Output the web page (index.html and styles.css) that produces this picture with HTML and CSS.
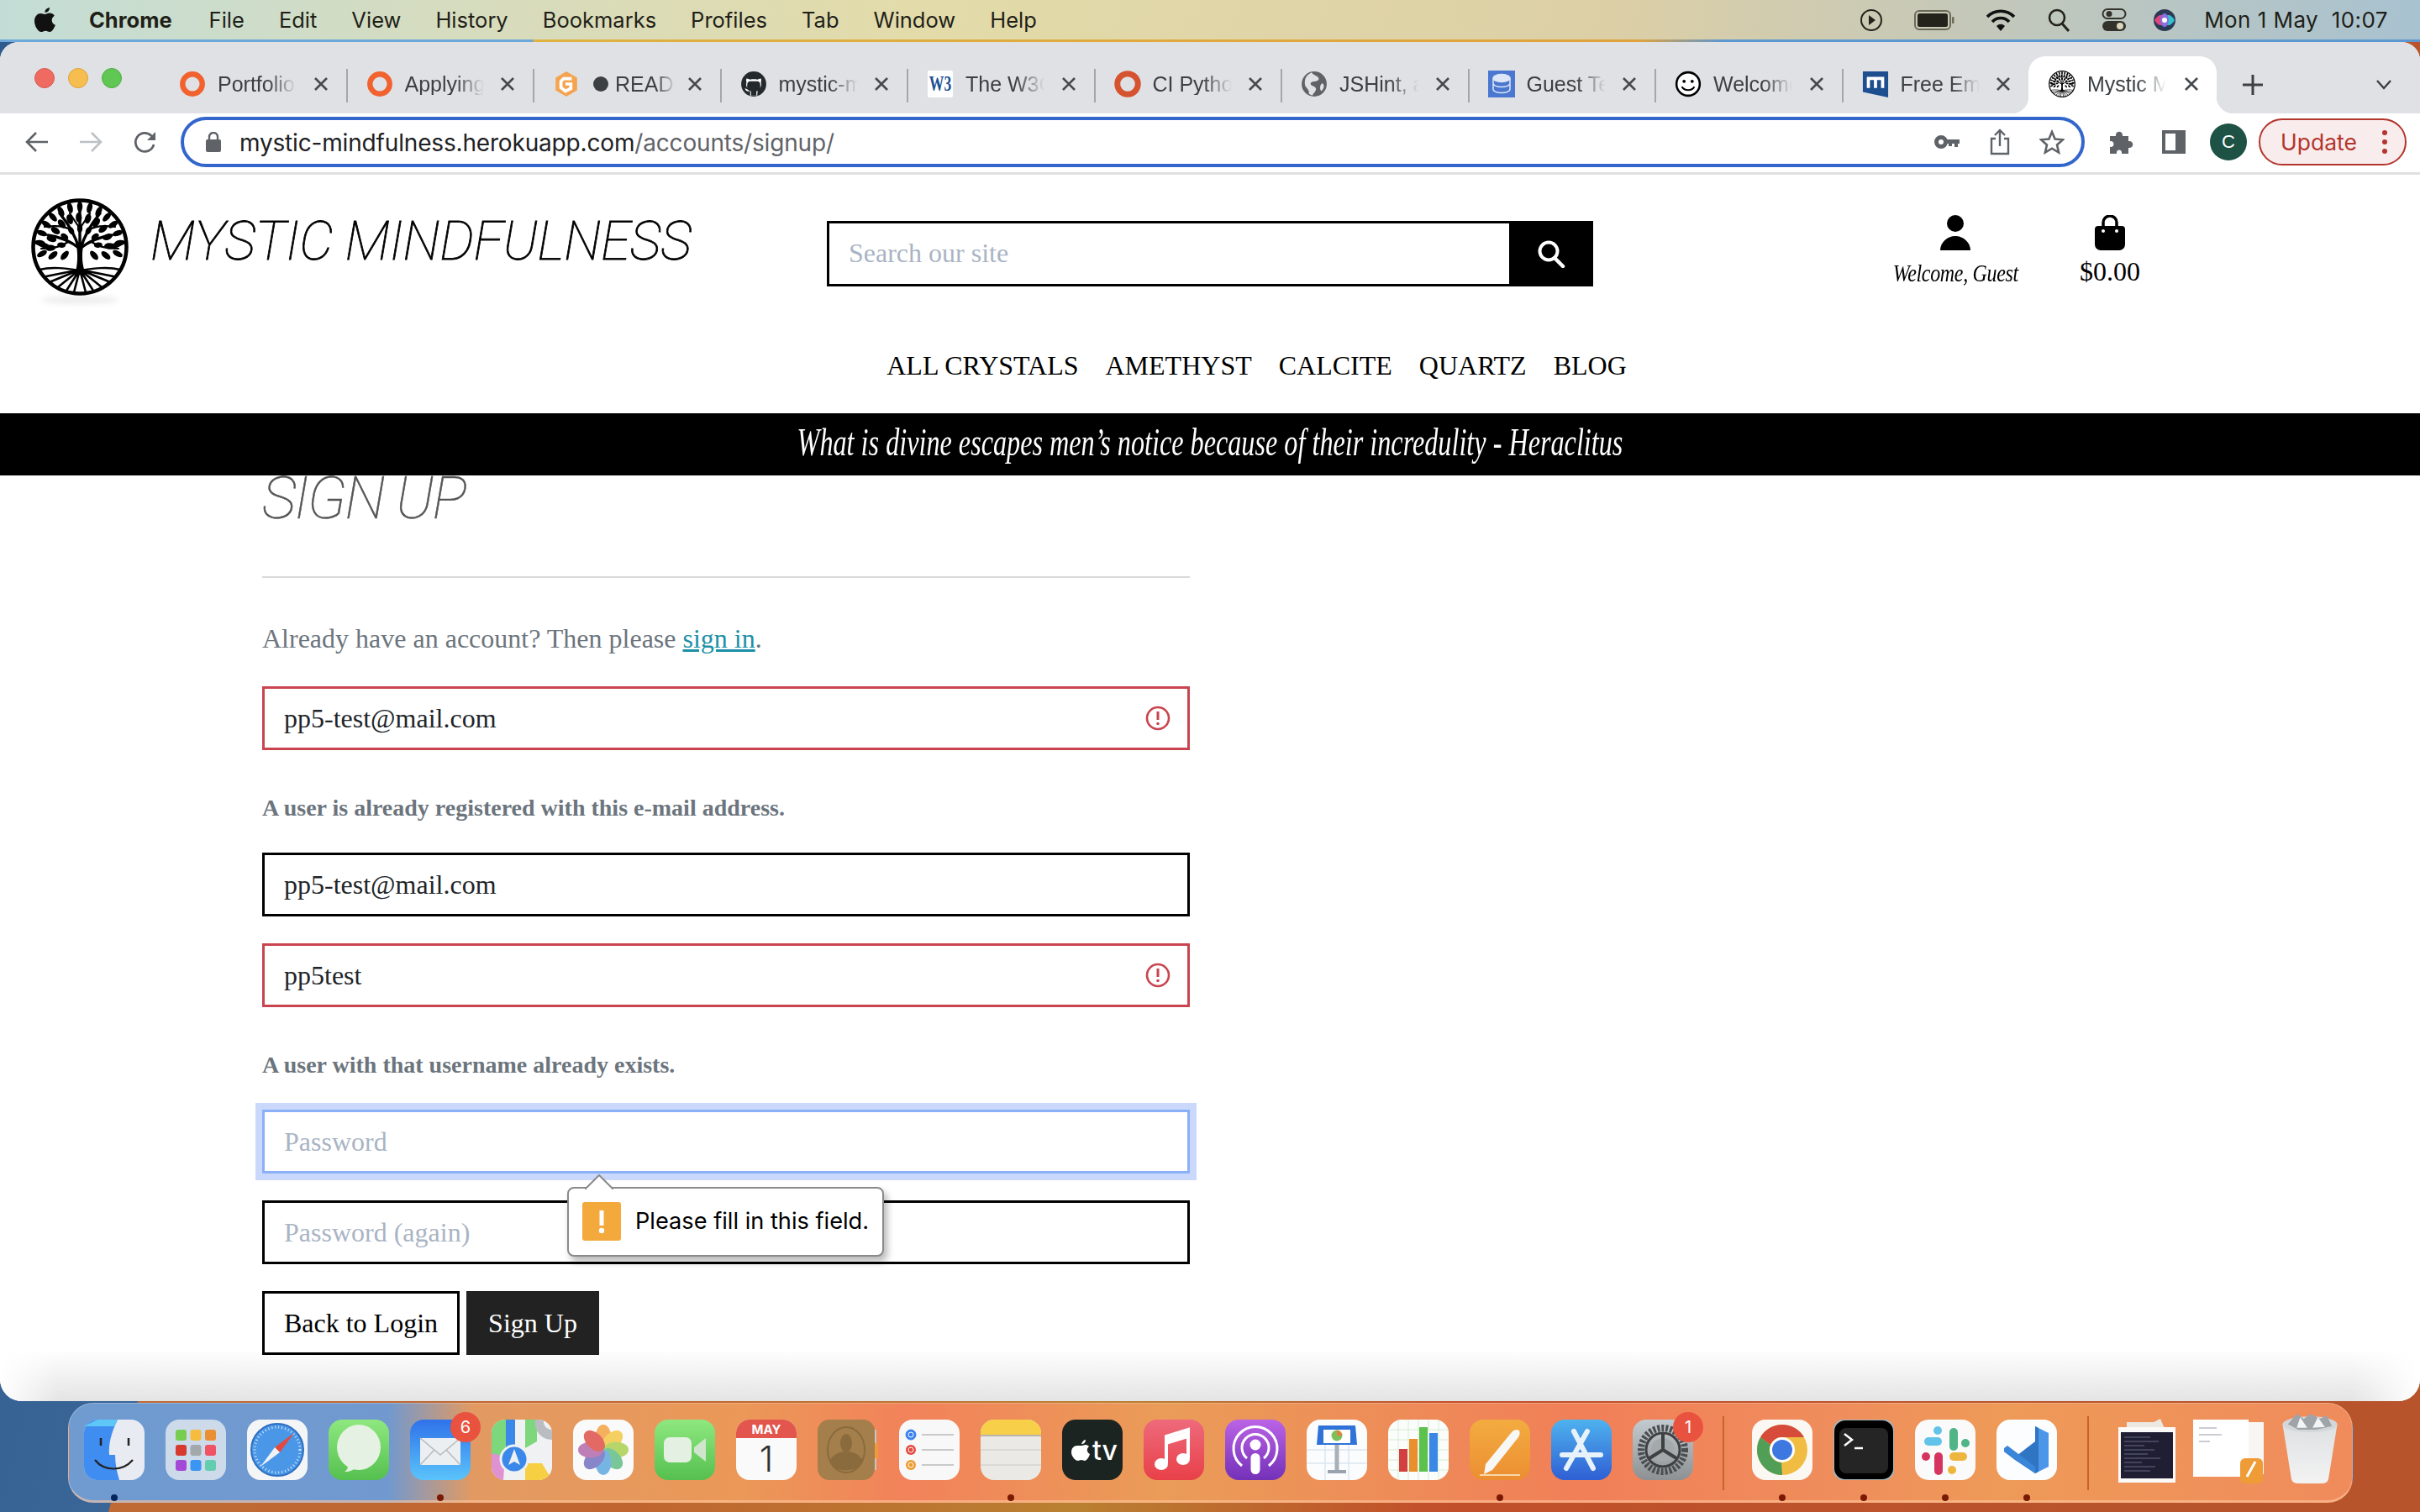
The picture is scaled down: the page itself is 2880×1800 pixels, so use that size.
FILE: index.html
```html
<!DOCTYPE html>
<html lang="en">
<head>
<meta charset="utf-8">
<title>Mystic Mindfulness</title>
<link rel="stylesheet" href="styles.css">
</head>
<body>
<svg class="defs" width="0" height="0">
  <defs>
    <symbol id="close" viewBox="0 0 20 20"><path d="M3 3L17 17M17 3L3 17" stroke="#45484d" stroke-width="2.6" fill="none"/></symbol>
    <symbol id="oring" viewBox="0 0 30 30"><circle cx="15" cy="15" r="11" fill="none" stroke="#f1622e" stroke-width="6"/></symbol>
    <symbol id="tree" viewBox="0 0 116 116">
      <circle cx="58" cy="58" r="55.5" fill="#fff" stroke="#000" stroke-width="4.5"/>
      <g fill="#000">
        <path d="M53 88C55 78 56 70 54 56L62 56C60 70 61 78 64 88Z"/>
        <ellipse cx="58" cy="10" rx="3.2" ry="6.5" transform="rotate(-84 58 58)"/><ellipse cx="58" cy="10" rx="3.2" ry="6.5" transform="rotate(-70 58 58)"/><ellipse cx="58" cy="10" rx="3.2" ry="6.5" transform="rotate(-56 58 58)"/><ellipse cx="58" cy="10" rx="3.2" ry="6.5" transform="rotate(-42 58 58)"/><ellipse cx="58" cy="10" rx="3.2" ry="6.5" transform="rotate(-28 58 58)"/><ellipse cx="58" cy="10" rx="3.2" ry="6.5" transform="rotate(-14 58 58)"/><ellipse cx="58" cy="10" rx="3.2" ry="6.5" transform="rotate(0 58 58)"/><ellipse cx="58" cy="10" rx="3.2" ry="6.5" transform="rotate(14 58 58)"/><ellipse cx="58" cy="10" rx="3.2" ry="6.5" transform="rotate(28 58 58)"/><ellipse cx="58" cy="10" rx="3.2" ry="6.5" transform="rotate(42 58 58)"/><ellipse cx="58" cy="10" rx="3.2" ry="6.5" transform="rotate(56 58 58)"/><ellipse cx="58" cy="10" rx="3.2" ry="6.5" transform="rotate(70 58 58)"/><ellipse cx="58" cy="10" rx="3.2" ry="6.5" transform="rotate(84 58 58)"/>
        <ellipse cx="58" cy="23" rx="3.6" ry="6" transform="rotate(-92 58 58)"/><ellipse cx="58" cy="23" rx="3.6" ry="6" transform="rotate(-74 58 58)"/><ellipse cx="58" cy="23" rx="3.6" ry="6" transform="rotate(-56 58 58)"/><ellipse cx="58" cy="23" rx="3.6" ry="6" transform="rotate(-38 58 58)"/><ellipse cx="58" cy="23" rx="3.6" ry="6" transform="rotate(-20 58 58)"/><ellipse cx="58" cy="23" rx="3.6" ry="6" transform="rotate(-2 58 58)"/><ellipse cx="58" cy="23" rx="3.6" ry="6" transform="rotate(16 58 58)"/><ellipse cx="58" cy="23" rx="3.6" ry="6" transform="rotate(34 58 58)"/><ellipse cx="58" cy="23" rx="3.6" ry="6" transform="rotate(52 58 58)"/><ellipse cx="58" cy="23" rx="3.6" ry="6" transform="rotate(70 58 58)"/><ellipse cx="58" cy="23" rx="3.6" ry="6" transform="rotate(88 58 58)"/>
        <ellipse cx="58" cy="36" rx="3.2" ry="5" transform="rotate(-84 58 58)"/><ellipse cx="58" cy="36" rx="3.2" ry="5" transform="rotate(-56 58 58)"/><ellipse cx="58" cy="36" rx="3.2" ry="5" transform="rotate(-28 58 58)"/><ellipse cx="58" cy="36" rx="3.2" ry="5" transform="rotate(0 58 58)"/><ellipse cx="58" cy="36" rx="3.2" ry="5" transform="rotate(28 58 58)"/><ellipse cx="58" cy="36" rx="3.2" ry="5" transform="rotate(56 58 58)"/><ellipse cx="58" cy="36" rx="3.2" ry="5" transform="rotate(84 58 58)"/>
        <ellipse cx="13" cy="66" rx="6.5" ry="3.2" transform="rotate(-30 13 66)"/><ellipse cx="26" cy="68" rx="6.5" ry="3.4" transform="rotate(-40 26 68)"/><ellipse cx="40" cy="68" rx="6.5" ry="3.4" transform="rotate(-50 40 68)"/><ellipse cx="75" cy="68" rx="6.5" ry="3.4" transform="rotate(50 75 68)"/><ellipse cx="89" cy="68" rx="6.5" ry="3.4" transform="rotate(40 89 68)"/><ellipse cx="103" cy="66" rx="6.5" ry="3.2" transform="rotate(30 103 66)"/>
        <ellipse cx="15" cy="56" rx="8" ry="3" transform="rotate(15 15 56)"/><ellipse cx="101" cy="56" rx="8" ry="3" transform="rotate(-15 101 56)"/>
      </g>
      <g fill="none" stroke="#000" stroke-linecap="round">
        <path stroke-width="3.4" d="M58 60C48 52 36 46 20 44M58 60C68 52 80 46 96 44M57 60C52 42 44 30 34 18M59 60C64 42 72 30 82 18M58 60L58 14"/>
        <path stroke-width="2.2" d="M44 52C36 58 26 60 12 60M72 52C80 58 90 60 104 60M48 38C42 34 30 32 16 34M68 38C74 34 86 32 100 34M58 36L46 18M58 36L70 18"/>
        <path stroke-width="2.4" d="M10 85C26 81 44 84 58 86C72 84 90 81 106 85"/>
        <path stroke-width="2.6" d="M58 85L18 93M58 85L24 99M58 85L33 105M58 85L42 110M58 85L51 112M58 85L65 112M58 85L74 110M58 85L83 105M58 85L92 99M58 85L98 93"/>
      </g>
    </symbol>
    <symbol id="invalid" viewBox="0 0 30 30"><circle cx="15" cy="15" r="13" fill="none" stroke="#c9444f" stroke-width="2.6"/><path d="M15 7V17" stroke="#c9444f" stroke-width="3"/><circle cx="15" cy="21.5" r="1.8" fill="#c9444f"/></symbol>
  </defs>
</svg>

<div class="desktop">
  <header class="menubar">
    <svg class="apple" viewBox="0 0 28 32"><path d="M20 1c.3 3-2.400 6-5.500 6C14 4 17 1.300 20 1zM14.500 9c1.500 0 3-1.400 5.500-1.400 2.300 0 4.500 1.200 5.800 3.100-4.700 2.800-3.800 9.200 1.100 11-1.100 3-3.800 8.300-6.700 8.300-1.900 0-2.700-1.300-5-1.300-2.400 0-3.300 1.400-5.100 1.400C6.400 30.100 2 23 2 17.200 2 11.300 5.800 8 9.300 8c2.300 0 3.800 1 5.200 1z"/></svg>
    <nav class="menus">
      <span class="menu-app">Chrome</span><span>File</span><span>Edit</span><span>View</span><span>History</span><span>Bookmarks</span><span>Profiles</span><span>Tab</span><span>Window</span><span>Help</span>
    </nav>
    <div class="status">
      <svg class="st" width="28" height="30" viewBox="0 0 28 30"><circle cx="14" cy="15" r="12" fill="none" stroke="#23231c" stroke-width="2"/><path d="M11 9L19 15L11 21Z" fill="#23231c"/></svg>
      <svg class="st" width="48" height="26" viewBox="0 0 48 26"><rect x="1" y="2" width="42" height="22" rx="5" fill="none" stroke="#6b6a58" stroke-width="2"/><rect x="4" y="5" width="36" height="16" rx="2.500" fill="#23231c"/><rect x="45" y="9" width="2.500" height="8" rx="1" fill="#6b6a58"/></svg>
      <svg class="st" width="36" height="28" viewBox="0 0 36 28"><g fill="none" stroke="#111" stroke-width="3.600"><path d="M2 10C11 1 25 1 34 10"/><path d="M8 16C13 10 23 10 28 16"/></g><path d="M13 21C16 18 20 18 23 21L18 27Z" fill="#111"/></svg>
      <svg class="st" width="28" height="30" viewBox="0 0 28 30"><circle cx="12" cy="12" r="9" fill="none" stroke="#23231c" stroke-width="2.600"/><path d="M18 19L26 28" stroke="#23231c" stroke-width="3"/></svg>
      <svg class="st st-tight" width="30" height="30" viewBox="0 0 30 30"><rect x="1.500" y="2" width="27" height="11" rx="5.500" fill="none" stroke="#33332b" stroke-width="2"/><circle cx="9" cy="7.500" r="3.500" fill="#33332b"/><rect x="1" y="16" width="28" height="12" rx="6" fill="#33332b"/><circle cx="22" cy="22" r="4" fill="#d9d6bd"/></svg>
      <svg class="st st-tight" width="28" height="28" viewBox="0 0 28 28"><circle cx="14" cy="14" r="13" fill="#2a3a55"/><path d="M2 14C8 4 14 8 14 14S8 24 2 14Z" fill="#e0457f"/><path d="M26 14C20 4 14 8 14 14S20 24 26 14Z" fill="#31c3cf"/><ellipse cx="14" cy="14" rx="5" ry="8" fill="#8a6fe0"/><circle cx="14" cy="14" r="3" fill="#fff"/></svg>
      <span class="clock">Mon 1 May&nbsp;&nbsp;10:07</span>
    </div>
  </header>

  <section class="window">
    <div class="tabstrip">
      <div class="lights"><i class="light red"></i><i class="light amber"></i><i class="light green"></i></div>
      <div class="tab"><svg class="fav"><use href="#oring"/></svg><span class="tab-title">Portfolio</span><svg class="x"><use href="#close"/></svg></div><i class="tsep"></i>
      <div class="tab"><svg class="fav"><use href="#oring"/></svg><span class="tab-title">Applying</span><svg class="x"><use href="#close"/></svg></div><i class="tsep"></i>
      <div class="tab"><svg class="fav" viewBox="0 0 30 30"><path d="M15 1L27 8V22L15 29L3 22V8Z" fill="#f4a450"/><path d="M21 9H12L9 12V19L14 23L20 20V15H14" fill="none" stroke="#fff" stroke-width="3.500"/></svg><i class="unsaved"></i><span class="tab-title tab-title-short">READI</span><svg class="x"><use href="#close"/></svg></div><i class="tsep"></i>
      <div class="tab"><svg class="fav" viewBox="0 0 30 30"><circle cx="15" cy="15" r="14" fill="#24292e"/><path d="M11 28V23C7 24 6 22 5 20C7 20 8 22 11 21C7 20 6 17 7 13C6 11 7 9 7 9C9 9 10 10 11 10C13 9.500 17 9.500 19 10C20 10 21 9 23 9C23 9 24 11 23 13C24 17 23 20 19 21C20 22 19 24 19 28Z" fill="#fff"/><path d="M12 28V23C8 23 7 19 8 14C9 11 12 12 15 12C18 12 21 11 22 14C23 19 22 23 18 23V28Z" fill="#24292e"/></svg><span class="tab-title">mystic-m</span><svg class="x"><use href="#close"/></svg></div><i class="tsep"></i>
      <div class="tab"><svg class="fav" viewBox="0 0 32 34"><rect width="32" height="34" rx="2" fill="#fff"/><text class="w3" x="2" y="26" textLength="28" lengthAdjust="spacingAndGlyphs">W3</text></svg><span class="tab-title">The W3C</span><svg class="x"><use href="#close"/></svg></div><i class="tsep"></i>
      <div class="tab"><svg class="fav" viewBox="0 0 30 30"><circle cx="15" cy="15" r="11.500" fill="none" stroke="#d6532f" stroke-width="6.500"/></svg><span class="tab-title">CI Pytho</span><svg class="x"><use href="#close"/></svg></div><i class="tsep"></i>
      <div class="tab"><svg class="fav" viewBox="0 0 30 30"><circle cx="15" cy="15" r="14" fill="#5f6368"/><path d="M12 2C15 6 21 6 20 10C18 13 13 11 11 14C10 17 16 17 17 20C17 24 14 25 13 28L9 26C10 22 7 20 5 17C4 12 4 6 12 2ZM24 14C27 16 26 20 23 23C21 21 21 16 24 14Z" fill="#dfe1e5"/></svg><span class="tab-title">JSHint, a</span><svg class="x"><use href="#close"/></svg></div><i class="tsep"></i>
      <div class="tab"><svg class="fav" viewBox="0 0 32 32"><rect width="32" height="32" fill="#4a77cf"/><g fill="#4a77cf" stroke="#dce6f7" stroke-width="1.500"><path d="M6 22C6 28 26 28 26 22V17H6Z"/><path d="M6 15C6 21 26 21 26 15V10H6Z"/><ellipse cx="16" cy="9" rx="10" ry="4.500" fill="#dce6f7"/></g></svg><span class="tab-title">Guest Te</span><svg class="x"><use href="#close"/></svg></div><i class="tsep"></i>
      <div class="tab"><svg class="fav" viewBox="0 0 30 30"><circle cx="15" cy="15" r="13" fill="#fff" stroke="#000" stroke-width="2.400"/><circle cx="10.500" cy="12" r="1.800"/><circle cx="19.500" cy="12" r="1.800"/><path d="M8 18C11 23 19 23 22 18" fill="none" stroke="#000" stroke-width="2"/></svg><span class="tab-title">Welcome</span><svg class="x"><use href="#close"/></svg></div><i class="tsep"></i>
      <div class="tab"><svg class="fav" viewBox="0 0 32 34"><path d="M0 1H32V34L0 27Z" fill="#1d4e8f"/><path d="M7 22V10H25V22M16 10V22" fill="none" stroke="#fff" stroke-width="4"/></svg><span class="tab-title">Free Em</span><svg class="x"><use href="#close"/></svg></div>
      <div class="tab tab-active"><svg class="fav"><use href="#tree"/></svg><span class="tab-title">Mystic M</span><svg class="x"><use href="#close"/></svg></div>
      <svg class="newtab" width="24" height="24" viewBox="0 0 24 24"><path d="M12 0V24M0 12H24" stroke="#3c4043" stroke-width="3"/></svg>
      <svg class="tabmenu" width="18" height="12" viewBox="0 0 18 12"><path d="M1 1L9 10L17 1" fill="none" stroke="#3c4043" stroke-width="2.400"/></svg>
    </div>

    <div class="toolbar">
      <svg class="tool-back" width="28" height="26" viewBox="0 0 28 26"><path d="M27 13H3M13 2L2 13L13 24" fill="none" stroke="#5f6368" stroke-width="2.600"/></svg>
      <svg class="tool-fwd" width="28" height="26" viewBox="0 0 28 26"><path d="M1 13H25M15 2L26 13L15 24" fill="none" stroke="#bdc1c6" stroke-width="2.600"/></svg>
      <svg class="tool-reload" width="28" height="28" viewBox="0 0 28 28"><path d="M24 17A11 11 0 1 1 21 6.500L25 10" fill="none" stroke="#5f6368" stroke-width="2.800"/><path d="M26 2V12H16Z" fill="#5f6368"/></svg>
      <div class="omnibox">
        <svg class="lock" width="18" height="24" viewBox="0 0 18 24"><rect y="9" width="18" height="15" rx="2" fill="#5f6368"/><path d="M4 10V6A5 5 0 0 1 14 6V10" fill="none" stroke="#5f6368" stroke-width="2.400"/></svg>
        <span class="url">mystic-mindfulness.herokuapp.com<span class="url-path">/accounts/signup/</span></span>
        <svg class="omni-key" width="30" height="20" viewBox="0 0 30 20"><circle cx="8" cy="10" r="5.500" fill="none" stroke="#5f6368" stroke-width="5"/><path d="M13 7H30V12H28V16H24V12H21V15H17V12H13Z" fill="#5f6368"/></svg>
        <svg class="omni-share" width="26" height="32" viewBox="0 0 26 32"><path d="M8 12H3V30H23V12H18M13 21V2M7 8L13 2L19 8" fill="none" stroke="#5f6368" stroke-width="2.400"/></svg>
        <svg class="omni-star" width="30" height="30" viewBox="0 0 30 30"><path d="M15 3L18.600 11.500L28 12.300L21 18.400L23.100 27.500L15 22.700L6.900 27.500L9 18.400L2 12.300L11.400 11.500Z" fill="none" stroke="#5f6368" stroke-width="2.600"/></svg>
      </div>
      <svg class="tool-ext" width="30" height="30" viewBox="0 0 30 30"><path d="M2 8H9C8 1 18 1 17 8H24V14C31 13 31 23 24 22V29H16C17 23 9 23 10 29H2V21C8 22 8 13 2 14Z" fill="#5f6368"/></svg>
      <svg class="tool-panel" width="28" height="28" viewBox="0 0 28 28"><path d="M0 0H28V28H0ZM4 4V24H16V4Z" fill="#5f6368" fill-rule="evenodd"/></svg>
      <div class="avatar">C</div>
      <div class="update"><span class="update-label">Update</span><svg class="update-dots" width="6" height="28" viewBox="0 0 6 28"><circle cx="3" cy="3" r="3"/><circle cx="3" cy="14" r="3"/><circle cx="3" cy="25" r="3"/></svg></div>
    </div>

    <main class="page">
      <header class="site-head">
        <div class="head-top">
          <div class="brand">
            <div class="logo"><svg class="logo-img"><use href="#tree"/></svg></div>
            <span class="brand-name">MYSTIC MINDFULNESS</span>
          </div>
          <form class="search">
            <input class="search-input" placeholder="Search our site" type="text">
            <button class="search-btn" type="button"><svg width="34" height="34" viewBox="0 0 34 34"><circle cx="14" cy="14" r="10.500" fill="none" stroke="#fff" stroke-width="4"/><path d="M21 22L31 32" stroke="#fff" stroke-width="4.500" stroke-linecap="round"/></svg></button>
          </form>
          <div class="account">
            <div class="acc-item acc-user">
              <svg width="36" height="42" viewBox="0 0 36 42"><circle cx="18" cy="10" r="10"/><path d="M0 42C0 33 8 25 18 25S36 33 36 42Z"/></svg>
              <span class="acc-welcome">Welcome, Guest</span>
            </div>
            <div class="acc-item acc-bag">
              <svg width="36" height="42" viewBox="0 0 36 42"><path d="M10 14V9A8 8 0 0 1 26 9V14" fill="none" stroke="#000" stroke-width="3.500"/><path d="M4 13H32A4 4 0 0 1 36 17V35A7 7 0 0 1 29 42H7A7 7 0 0 1 0 35V17A4 4 0 0 1 4 13Z"/><circle cx="10" cy="19" r="2" fill="#fff"/><circle cx="26" cy="19" r="2" fill="#fff"/></svg>
              <span class="acc-total">$0.00</span>
            </div>
          </div>
        </div>
        <nav class="site-nav">
          <a>ALL CRYSTALS</a><a>AMETHYST</a><a>CALCITE</a><a>QUARTZ</a><a>BLOG</a>
        </nav>
      </header>
      <div class="quote"><span class="quote-text">What is divine escapes men’s notice because of their incredulity - Heraclitus</span></div>

      <section class="signup">
        <h2 class="signup-title">SIGN UP</h2>
        <hr class="rule">
        <p class="lead">Already have an account? Then please <a class="link">sign in</a>.</p>
        <div class="field"><input class="control invalid" value="pp5-test@mail.com" type="text"><svg class="invalid-icon"><use href="#invalid"/></svg></div>
        <p class="err">A user is already registered with this e-mail address.</p>
        <div class="field"><input class="control" value="pp5-test@mail.com" type="text"></div>
        <div class="field"><input class="control invalid" value="pp5test" type="text"><svg class="invalid-icon"><use href="#invalid"/></svg></div>
        <p class="err">A user with that username already exists.</p>
        <div class="field"><input class="control focus" placeholder="Password" type="text"></div>
        <div class="field field-tip">
          <input class="control" placeholder="Password (again)" type="text">
          <div class="bubble">
            <svg class="bubble-arrow" width="34" height="18" viewBox="0 0 34 18"><path d="M0 18L17 1L34 18" fill="#fff" stroke="#8a8a8a" stroke-width="2"/></svg>
            <svg class="bubble-icon" width="46" height="46" viewBox="0 0 46 46"><rect width="46" height="46" rx="3" fill="#f3a93c"/><path d="M20.500 10H25.500V28H20.500Z" fill="#fff"/><circle cx="23" cy="34" r="3.200" fill="#fff"/></svg>
            <span>Please fill in this field.</span>
          </div>
        </div>
        <div class="actions"><button class="btn btn-back" type="button">Back to Login</button><button class="btn btn-go" type="button">Sign Up</button></div>
      </section>
    </main>
  </section>

  <footer class="dock">
    <div class="di"><svg viewBox="0 0 72 72"><rect width="72" height="72" rx="16" fill="#e8ebf2"/><path d="M16 0H40C32 16 29 30 30 42H37C37 52 39 62 42 72H16A16 16 0 0 1 0 56V16A16 16 0 0 1 16 0Z" fill="#3f8df0"/><path d="M16 0H40L36 8H0Z" fill="#5fc6f8"/><path d="M20 22V31M53 22V31" stroke="#222" stroke-width="2.500"/><path d="M13 48C24 62 46 62 58 48" fill="none" stroke="#222" stroke-width="2.200"/></svg><i class="dot dot-blue"></i></div>
    <div class="di"><svg viewBox="0 0 72 72"><rect width="72" height="72" rx="16" fill="#ccdaea"/><rect x="12" y="12" width="13" height="13" rx="3" fill="#76cd4f"/><rect x="29.500" y="12" width="13" height="13" rx="3" fill="#f5bc3d"/><rect x="47" y="12" width="13" height="13" rx="3" fill="#ea8f33"/><rect x="12" y="30" width="13" height="13" rx="3" fill="#d8392f"/><rect x="29.500" y="30" width="13" height="13" rx="3" fill="#a3a9ab"/><rect x="47" y="30" width="13" height="13" rx="3" fill="#ef5364"/><rect x="12" y="48" width="13" height="13" rx="3" fill="#a449d6"/><rect x="29.500" y="48" width="13" height="13" rx="3" fill="#3b95f2"/><rect x="47" y="48" width="13" height="13" rx="3" fill="#64cdb0"/></svg><i class="dot dot-none"></i></div>
    <div class="di"><svg viewBox="0 0 72 72"><rect width="72" height="72" rx="16" fill="#f4f5f7"/><circle cx="36" cy="36" r="31" fill="#4a97e8" stroke="#2f6fc0" stroke-width="2"/><circle cx="36" cy="36" r="27" fill="none" stroke="#d5e8fa" stroke-width="3" stroke-dasharray="1 3"/><path d="M56 16L33 33L39 39Z" fill="#e5483c"/><path d="M16 56L33 33L39 39Z" fill="#f1f2f4"/></svg><i class="dot dot-none"></i></div>
    <div class="di"><svg viewBox="0 0 72 72"><defs><linearGradient id="gg" x1="0" y1="0" x2="0" y2="1"><stop offset="0" stop-color="#8ee87f"/><stop offset="1" stop-color="#55c04f"/></linearGradient></defs><rect width="72" height="72" rx="16" fill="url(#gg)"/><ellipse cx="36" cy="33" rx="26" ry="27" fill="#e5f1e2"/><path d="M22 52C24 58 22 60 19 62C26 62 30 60 33 56Z" fill="#e5f1e2"/></svg><i class="dot dot-none"></i></div>
    <div class="di"><svg viewBox="0 0 72 72"><defs><linearGradient id="gm" x1="0" y1="0" x2="0" y2="1"><stop offset="0" stop-color="#2f72ea"/><stop offset="1" stop-color="#5bc4fb"/></linearGradient></defs><rect width="72" height="72" rx="16" fill="url(#gm)"/><rect x="12" y="22" width="48" height="32" rx="2" fill="#eceff1"/><path d="M12 22L36 42L60 22M12 54L29 36M60 54L43 36" fill="none" stroke="#b6babe" stroke-width="1.500"/></svg><b class="badge">6</b><i class="dot"></i></div>
    <div class="di"><svg viewBox="0 0 72 72"><clipPath id="cm"><rect width="72" height="72" rx="16"/></clipPath><g clip-path="url(#cm)"><rect width="72" height="72" fill="#f0f1f3"/><path d="M0 0H20V34L0 50Z" fill="#7cd77d"/><path d="M40 0H54V26L40 34Z" fill="#7cd77d"/><path d="M0 40V72H14L16 44Z" fill="#df92d2"/><path d="M40 72V52H60L72 72Z" fill="#f6cf42"/><path d="M17 0H28V40H17Z" fill="#3a88ea"/><path d="M52 0A20 20 0 0 0 72 24V12A10 10 0 0 1 62 0Z" fill="#b9bcc0"/><circle cx="27" cy="47" r="16" fill="#3a88ea" stroke="#eef0f2" stroke-width="3"/><path d="M27 35L34 54L27 50L20 54Z" fill="#eef0f2"/></g></svg><i class="dot dot-none"></i></div>
    <div class="di"><svg viewBox="0 0 72 72"><rect width="72" height="72" rx="16" fill="#fafafa"/><g opacity=".82"><ellipse cx="36" cy="21" rx="9.500" ry="15" fill="#f5a03c"/><ellipse cx="36" cy="21" rx="9.500" ry="15" fill="#f3c842" transform="rotate(45 36 36)"/><ellipse cx="36" cy="21" rx="9.500" ry="15" fill="#a9cf4b" transform="rotate(90 36 36)"/><ellipse cx="36" cy="21" rx="9.500" ry="15" fill="#5dbb84" transform="rotate(135 36 36)"/><ellipse cx="36" cy="21" rx="9.500" ry="15" fill="#5aa6df" transform="rotate(180 36 36)"/><ellipse cx="36" cy="21" rx="9.500" ry="15" fill="#6e6dc0" transform="rotate(225 36 36)"/><ellipse cx="36" cy="21" rx="9.500" ry="15" fill="#b165a9" transform="rotate(270 36 36)"/><ellipse cx="36" cy="21" rx="9.500" ry="15" fill="#df4a44" transform="rotate(315 36 36)"/></g></svg><i class="dot dot-none"></i></div>
    <div class="di"><svg viewBox="0 0 72 72"><rect width="72" height="72" rx="16" fill="url(#gg)"/><rect x="11" y="21" width="33" height="30" rx="7" fill="#e4f0e2"/><path d="M47 33L61 22V50L47 39Z" fill="#cfe6cc"/></svg><i class="dot dot-none"></i></div>
    <div class="di"><svg viewBox="0 0 72 72"><clipPath id="cc"><rect width="72" height="72" rx="16"/></clipPath><g clip-path="url(#cc)"><rect width="72" height="72" fill="#fafafa"/><rect width="72" height="22" fill="#e2564e"/></g><text class="cal-mon" x="36" y="17" text-anchor="middle">MAY</text><text class="cal-day" x="36" y="62" text-anchor="middle">1</text></svg><i class="dot dot-none"></i></div>
    <div class="di"><svg viewBox="0 0 72 72"><path d="M60 12H70V60H60Z" fill="#c9c6c0"/><path d="M60 28H72V46H60Z" fill="#f09a3c"/><rect width="68" height="72" rx="14" fill="#a47f4b"/><ellipse cx="34" cy="36" rx="22" ry="27" fill="none" stroke="#8a6b3d" stroke-width="2"/><ellipse cx="34" cy="28" rx="7" ry="11" fill="#8a6b3d"/><path d="M14 50C20 34 48 34 54 50C48 64 20 64 14 50Z" fill="#8a6b3d"/></svg><i class="dot dot-none"></i></div>
    <div class="di"><svg viewBox="0 0 72 72"><rect width="72" height="72" rx="16" fill="#f8f8f8"/><circle cx="14" cy="18" r="6" fill="#3a82ef" stroke="#3a82ef"/><circle cx="14" cy="36" r="6" fill="#e5493f"/><circle cx="14" cy="54" r="6" fill="#ed9a2f"/><circle cx="14" cy="18" r="3" fill="none" stroke="#fff"/><circle cx="14" cy="36" r="3" fill="none" stroke="#fff"/><circle cx="14" cy="54" r="3" fill="none" stroke="#fff"/><path d="M27 18H65M27 36H65M27 54H65" stroke="#c9c9c9" stroke-width="2"/></svg><i class="dot dot-none"></i></div>
    <div class="di"><svg viewBox="0 0 72 72"><clipPath id="cn"><rect width="72" height="72" rx="16"/></clipPath><g clip-path="url(#cn)"><rect width="72" height="72" fill="#ebe9e5"/><rect width="72" height="18" fill="#f7cf49"/><path d="M0 19H72" stroke="#b8b5ac" stroke-width="2"/><path d="M0 36H72M0 54H72" stroke="#d5d3ce" stroke-width="1.500"/></g></svg><i class="dot"></i></div>
    <div class="di"><svg viewBox="0 0 72 72"><rect width="72" height="72" rx="16" fill="#1c2422"/><path d="M23 17C24 14 26 12 28 12C28 15 26 17 23 17ZM23 19C25 19 26 18 28 18C30 18 31 19 32 20C29 22 29 27 33 29C32 33 29 37 27 37C25 37 25 36 23 36C21 36 20 37 19 37C16 37 11 32 11 27C11 22 14 19 18 19C20 19 21 19 23 19Z" fill="#fff" transform="translate(0 12)"/><text class="tv" x="36" y="48">tv</text></svg><i class="dot dot-none"></i></div>
    <div class="di"><svg viewBox="0 0 72 72"><defs><linearGradient id="gr" x1="0" y1="0" x2="0" y2="1"><stop offset="0" stop-color="#ee6a7c"/><stop offset="1" stop-color="#e84048"/></linearGradient></defs><rect width="72" height="72" rx="16" fill="url(#gr)"/><path d="M27 52V20L53 12V46" fill="none" stroke="#fff" stroke-width="4"/><path d="M27 22L53 14V22L27 30Z" fill="#fff"/><ellipse cx="21" cy="53" rx="8" ry="7" fill="#fff"/><ellipse cx="47" cy="47" rx="8" ry="7" fill="#fff"/></svg><i class="dot dot-none"></i></div>
    <div class="di"><svg viewBox="0 0 72 72"><defs><linearGradient id="gp" x1="0" y1="0" x2="0" y2="1"><stop offset="0" stop-color="#bb63e6"/><stop offset="1" stop-color="#7331b8"/></linearGradient></defs><rect width="72" height="72" rx="16" fill="url(#gp)"/><g fill="none" stroke="#fff" stroke-width="3"><path d="M20 55A26 26 0 1 1 52 55"/><path d="M26 46A16 16 0 1 1 46 46"/></g><circle cx="36" cy="30" r="6.500" fill="#fff"/><rect x="30.500" y="40" width="11" height="25" rx="5.500" fill="#fff"/></svg><i class="dot dot-none"></i></div>
    <div class="di"><svg viewBox="0 0 72 72"><rect width="72" height="72" rx="16" fill="#fbfcfe"/><path d="M0 36H72M0 52H72M22 30V72M50 30V72" stroke="#dce5f0" stroke-width="1.500"/><path d="M14 7H58L60 30H12Z" fill="#2f73d9"/><rect x="20" y="12" width="32" height="16" fill="#fff"/><circle cx="36" cy="19" r="6.500" fill="#7cc05b"/><path d="M36 12.500A6.500 6.500 0 0 1 42 19H36Z" fill="#e6803b"/><rect x="33.500" y="30" width="5" height="30" fill="#a8b0ba"/><rect x="25" y="60" width="22" height="4" fill="#9aa2ac"/></svg><i class="dot dot-none"></i></div>
    <div class="di"><svg viewBox="0 0 72 72"><rect width="72" height="72" rx="16" fill="#fbfdfb"/><path d="M0 12H72M0 24H72M0 36H72M0 48H72M0 60H72M12 0V72M24 0V72M36 0V72M48 0V72M60 0V72" stroke="#d4ecd3" stroke-width="1"/><rect x="13" y="35" width="10" height="27" fill="#d2403f"/><rect x="25" y="23" width="10" height="39" fill="#ea8f2d"/><rect x="37" y="9" width="10" height="53" fill="#5dc24d"/><rect x="49" y="16" width="10" height="46" fill="#3a87e5"/></svg><i class="dot dot-none"></i></div>
    <div class="di"><svg viewBox="0 0 72 72"><defs><linearGradient id="gpg" x1="0" y1="0" x2="0" y2="1"><stop offset="0" stop-color="#f3ac40"/><stop offset="1" stop-color="#ec8e32"/></linearGradient></defs><rect width="72" height="72" rx="16" fill="url(#gpg)"/><path d="M56 12C61 12 60 18 58 21L27 60L17 65L19 53L50 15C52 13 54 12 56 12Z" fill="#f7f7f5"/><path d="M12 66H60" stroke="#f9d7a8" stroke-width="2"/></svg><i class="dot"></i></div>
    <div class="di"><svg viewBox="0 0 72 72"><defs><linearGradient id="ga" x1="0" y1="0" x2="0" y2="1"><stop offset="0" stop-color="#4eb2ee"/><stop offset="1" stop-color="#2f5fd4"/></linearGradient></defs><rect width="72" height="72" rx="16" fill="url(#ga)"/><g stroke="#e8f2fb" stroke-width="6" stroke-linecap="round" fill="none"><path d="M27 14L50 58"/><path d="M43 14L18 58"/><path d="M13 42H59"/></g></svg><i class="dot dot-none"></i></div>
    <div class="di"><svg viewBox="0 0 72 72"><defs><linearGradient id="gs" x1="0" y1="0" x2="0" y2="1"><stop offset="0" stop-color="#c3cbd0"/><stop offset="1" stop-color="#8d9193"/></linearGradient></defs><rect width="72" height="72" rx="16" fill="url(#gs)"/><circle cx="36" cy="36" r="26" fill="none" stroke="#4b4e50" stroke-width="8" stroke-dasharray="3 2"/><circle cx="36" cy="36" r="20" fill="none" stroke="#3e4042" stroke-width="3"/><circle cx="36" cy="36" r="14" fill="#a4a9ac"/><path d="M36 36V17M36 36L20 46M36 36L52 46" stroke="#3e4042" stroke-width="4"/></svg><b class="badge badge-settings">1</b><i class="dot dot-none"></i></div>
    <i class="dock-sep dock-sep-a"></i>
    <div class="di"><svg viewBox="0 0 72 72"><rect width="72" height="72" rx="16" fill="#fbf8f4"/><circle cx="36" cy="36" r="30" fill="#f0bd42"/><path d="M10 21A30 30 0 0 1 62 21H36A15 15 0 0 0 22 30Z" fill="#d64b39"/><path d="M10 21L22 30A15 15 0 0 0 35 51L36 66A30 30 0 0 1 10 21Z" fill="#519e57"/><circle cx="36" cy="36" r="15" fill="#fff"/><circle cx="36" cy="36" r="12" fill="#3d78e0"/></svg><i class="dot"></i></div>
    <div class="di"><svg viewBox="0 0 72 72"><rect width="72" height="72" rx="14" fill="#000" stroke="#a5b5b8" stroke-width="2"/><rect x="7" y="10" width="58" height="54" rx="8" fill="#252525"/><path d="M13 17L22 24L13 31" fill="none" stroke="#fff" stroke-width="2.500"/><path d="M25 34H35" stroke="#fff" stroke-width="2.500"/></svg><i class="dot"></i></div>
    <div class="di"><svg viewBox="0 0 72 72"><rect width="72" height="72" rx="16" fill="#fafafa"/><g stroke-linecap="round" stroke-width="10" fill="none"><path d="M27 26H16" stroke="#62c3ea"/><path d="M46 15V32" stroke="#4fb486"/><path d="M27 13H27" stroke="#62c3ea"/><path d="M60 28H60" stroke="#4fb486"/><path d="M28 44V61" stroke="#d6345f"/><path d="M13 44H13" stroke="#d6345f"/><path d="M46 44H57" stroke="#edb63f"/><path d="M44 60H44" stroke="#edb63f"/></g></svg><i class="dot"></i></div>
    <div class="di"><svg viewBox="0 0 72 72"><rect width="72" height="72" rx="16" fill="#fbfdff"/><path d="M46 8L62 16V56L46 64Z" fill="#4b96e8"/><path d="M46 8V26L24 43L13 35L9 38L22 48L46 64L50 62V10Z" fill="#2f75c4"/><path d="M9 34L13 31L46 56V64L9 38Z" fill="#3a86d8"/></svg><i class="dot"></i></div>
    <i class="dock-sep dock-sep-b"></i>
    <div class="di di-file"><svg viewBox="0 0 72 80"><path d="M12 8H44L52 4L58 18H12Z" fill="#ece8e2"/><rect x="2" y="14" width="68" height="66" fill="#fbfaf8"/><rect x="5" y="20" width="62" height="55" fill="#201e33"/><path d="M9 26H40M9 31H50M9 36H33M9 41H45M9 46H37M9 51H52M9 56H30M9 61H46M9 66H40" stroke="#646a86" stroke-width="1"/></svg></div>
    <div class="di di-wide"><svg viewBox="0 0 84 80"><rect y="5" width="84" height="62" fill="#f8f6f2"/><rect width="66" height="68" y="2" fill="#fff"/><path d="M7 12H28M7 20H34M7 28H20" stroke="#99a" stroke-width="1"/><rect x="56" y="48" width="27" height="30" rx="6" fill="#ef9b36"/><path d="M74 52L64 70" stroke="#fff" stroke-width="3"/></svg></div>
    <div class="di di-file"><svg viewBox="0 0 66 80"><defs><linearGradient id="gt" x1="0" y1="0" x2="0" y2="1"><stop offset="0" stop-color="#dde0e2"/><stop offset="1" stop-color="#f3f3f3"/></linearGradient></defs><path d="M2 12L12 74Q13 79 20 79H46Q53 79 54 74L64 12Z" fill="url(#gt)"/><ellipse cx="33" cy="12" rx="31" ry="9" fill="#d4d7d9"/><path d="M8 12L18 0L26 6L34 0L44 6L52 2L58 14L40 18L20 18Z" fill="#9ea4a8"/><path d="M22 4L30 16L18 16ZM42 4L50 15L36 16Z" fill="#f3f4f5"/></svg></div>
  </footer>
</div>
</body>
</html>
```
FILE: styles.css
```css
* { box-sizing: border-box; }
html, body { margin: 0; padding: 0; background: #fff; }
.defs { position: absolute; }
i, b { display: block; }

.desktop {
  width: 2880px; height: 1800px; overflow: hidden;
  display: flex; flex-direction: column;
  background:
    linear-gradient(105deg, #2f5a8d 0, #3a6597 590px, #bf6a35 591px, #c0652f 1200px, #b98031 1700px, #c2502a 2100px, #b8542c 2880px);
}

/* menu bar */
.menubar {
  height: 50px; flex: none; display: flex; align-items: center; position: relative;
  color: #1f1f18; font: 25.5px/1 Inter, sans-serif;
  background: linear-gradient(90deg, #c3ddd6 0, #d6dcbf 540px, #e3dba9 1100px, #dccfa6 1920px, #c4c8b9 2350px, #a8c2d0 2880px);
  border-bottom: 3px solid;
  border-image: linear-gradient(90deg, #6da8d8 0, #6da8d8 634px, #dfb242 636px, #e0a23c 1950px, #5c97d0 2050px, #5c97d0 100%) 1;
}
.apple { width: 28px; height: 32px; margin: 0 0 0 39px; fill: #111; flex: none; }
.menus { display: flex; gap: 41px; margin-left: 39px; }
.menu-app { font-weight: 700; margin-right: 3px; }
.status { margin-left: auto; display: flex; align-items: center; padding-right: 38px; font-size: 26px; }
.st { flex: none; margin-right: 37px; }
.st-tight { margin-right: 31px; }
.clock { white-space: nowrap; letter-spacing: .45px; margin-left: 2px; }

/* browser window */
.window {
  height: 1618px; flex: none; display: flex; flex-direction: column;
  background: #fff; border-radius: 22px 22px 26px 26px; overflow: hidden; position: relative;
}
.tabstrip {
  height: 85px; flex: none; background: #dfe1e5; display: flex; align-items: flex-end; padding-left: 41px; position: relative;
}
.lights { display: flex; gap: 16px; width: 150px; height: 68px; padding-top: 14px; flex: none; }
.light { width: 24px; height: 24px; border-radius: 50%; }
.red { background: #ef6a60; border: 1px solid #d9584f; }
.amber { background: #f6bd4f; border: 1px solid #dea13a; }
.green { background: #60c654; border: 1px solid #4dae42; }
.tab {
  width: 220.5px; height: 68px; flex: none; display: flex; align-items: center; position: relative;
  padding: 0 20px 2px 22px; color: #3c4043; font: 25px/1 "Liberation Sans", sans-serif;
}
.tsep { width: 2px; height: 40px; background: #a4a6aa; flex: none; margin-bottom: 13px; }
.fav { width: 32px; height: 32px; flex: none; margin-right: 14px; }
.tab-title { white-space: nowrap; width: 106px; -webkit-mask-image: linear-gradient(90deg, #000 60px, transparent 94px); mask-image: linear-gradient(90deg, #000 60px, transparent 94px); }
.tab-title-short { width: 78px; -webkit-mask-image: linear-gradient(90deg, #000 48px, transparent 72px); mask-image: linear-gradient(90deg, #000 48px, transparent 72px); }
.unsaved { width: 18px; height: 18px; border-radius: 50%; background: #3c4043; margin: 0 8px 0 2px; flex: none; }
.x { width: 20px; height: 20px; margin-left: auto; flex: none; }
.w3 { font: 700 26px "Liberation Serif", serif; fill: #1a4f93; }
.tab-active { background: #fff; border-radius: 20px 20px 0 0; width: 224px; padding-left: 24px; }
.tab-active::before, .tab-active::after { content: ""; position: absolute; bottom: 0; width: 20px; height: 20px; }
.tab-active::before { left: -20px; background: radial-gradient(circle at 0 0, #dfe1e5 20px, #fff 20.5px); }
.tab-active::after { right: -20px; background: radial-gradient(circle at 100% 0, #dfe1e5 20px, #fff 20.5px); }
.newtab { margin: 0 0 22px 31px; flex: none; }
.tabmenu { margin: 0 0 28px 135px; flex: none; }

.toolbar {
  height: 73px; flex: none; display: flex; align-items: center; background: #fff; border-bottom: 3px solid #e0e0e0; padding: 0 17px 3px 30px;
}
.tool-back { margin-right: 36px; flex: none; }
.tool-fwd { margin-right: 37px; flex: none; }
.tool-reload { margin-right: 28px; flex: none; }
.omnibox {
  width: 2266px; height: 60px; flex: none; border: 4px solid #3366cc; border-radius: 30px; display: flex; align-items: center; padding-left: 26px; background: #fff;
}
.lock { flex: none; margin-right: 22px; }
.url { font: 28px/1 Inter, sans-serif; letter-spacing: -.17px; color: #202124; white-space: nowrap; padding-top: 2px; }
.url-path { color: #5f6368; }
.omni-key { margin-left: auto; flex: none; }
.omni-share { margin-left: 35px; flex: none; }
.omni-star { margin: 0 20px 0 34px; flex: none; }
.tool-ext { margin-left: 28px; flex: none; }
.tool-panel { margin-left: 34px; flex: none; }
.avatar { width: 44px; height: 44px; border-radius: 50%; background: #1d5244; color: #fff; font: 22px/44px "Liberation Sans", sans-serif; text-align: center; margin-left: 29px; flex: none; }
.update {
  width: 176px; height: 56px; flex: none; margin-left: 14px; border: 2px solid #b3352c; border-radius: 28px; background: #f8ecec;
  color: #b3352c; font: 26.5px/1 Inter, sans-serif; display: flex; align-items: center; padding-left: 24px;
}
.update-label { padding-top: 2px; }
.update-dots { margin-left: auto; margin-right: 21px; fill: #b3352c; flex: none; }

/* site */
.page { flex: 1; position: relative; background: #fff; font: 32px/1.5 "Liberation Serif", serif; color: #212529; }
.page::after {
  content: ""; position: absolute; left: 0; right: 0; bottom: 0; height: 62px; pointer-events: none;
  background: linear-gradient(180deg, rgba(228,228,228,0) 0, #e4e4e4 100%);
  -webkit-mask-image: linear-gradient(90deg, transparent 0, #000 70px, #000 2800px, transparent 100%);
  mask-image: linear-gradient(90deg, transparent 0, #000 70px, #000 2800px, transparent 100%);
}
.site-head { height: 284px; display: flex; flex-direction: column; }
.head-top { display: flex; height: 200px; flex: none; }
.brand { width: 984px; flex: none; display: flex; padding: 28px 0 0 37px; }
.logo { width: 116px; height: 116px; flex: none; position: relative; }
.logo::after { content: ""; position: absolute; left: 12px; right: 12px; top: 116px; height: 10px; border-radius: 50%; background: rgba(0,0,0,.07); filter: blur(3px); }
.logo-img { width: 116px; height: 116px; display: block; position: relative; z-index: 1; }
.brand-name {
  font: italic 100 64px/1 Roboto, sans-serif; color: #000; white-space: nowrap; margin: 20px 0 0 26px; height: 64px;
  letter-spacing: -.35px; -webkit-text-stroke: .8px #000;
}
.search { width: 912px; height: 78px; flex: none; margin-top: 55px; display: flex; }
.search-input {
  flex: 1; min-width: 0; border: 3px solid #000; border-right: 0; height: 78px; padding: 0 23px 2px; font: 32px "Liberation Serif", serif; outline: 0; background: #fff; border-radius: 0;
}
.search-input::placeholder { color: #a9b4c4; opacity: 1; }
.search-btn { width: 100px; height: 78px; background: #000; border: 0; padding: 0; display: flex; align-items: center; justify-content: center; }
.account { display: flex; padding: 48px 0 0 0; flex: 1; }
.acc-item { display: flex; flex-direction: column; align-items: center; flex: none; }
.acc-user { width: 200px; margin-left: 331px; }
.acc-bag { width: 120px; margin-left: 24px; }
.acc-welcome { font: italic 30px/1 "Liberation Serif", serif; margin-top: 12px; color: #000; white-space: nowrap; transform: scaleX(.8); letter-spacing: -.4px; }
.acc-total { font: 32px/1 "Liberation Serif", serif; margin-top: 9px; color: #000; }
.site-nav { display: flex; justify-content: center; gap: 32px; padding: 0 0 0 111px; margin-top: 3px; font-size: 32px; line-height: 48px; color: #000; }

.quote { height: 74px; background: #000; color: #fff; display: flex; justify-content: center; align-items: center; overflow: hidden; padding-bottom: 5px; }
.quote-text { font: italic 46px/1 "Liberation Serif", serif; white-space: nowrap; display: block; transform: scaleX(.7); flex: none; }

.signup { width: 1104px; margin-left: 312px; }
.signup-title { font: italic 100 70px/1 Roboto, sans-serif; color: #555; margin: -8px 0 0; height: 128px; -webkit-text-stroke: .5px #555; letter-spacing: -2px; }
.rule { margin: 0; border: 0; border-top: 2px solid #d9d9d9; }
.lead { margin: 48px 0 0; height: 48px; line-height: 48px; color: #6c757d; }
.link { color: #1c90a8; text-decoration: underline; }
.field { position: relative; }
.lead + .field { margin-top: 33px; }
.control {
  display: block; width: 100%; height: 76px; padding: 0 23px; border: 3px solid #000; border-radius: 0; font: 32px "Liberation Serif", serif; color: #212529; background: #fff; outline: 0;
}
.control::placeholder { color: #a9b4c4; opacity: 1; }
.control.invalid { border-color: #c9444f; }
.control.focus { border-color: #8ab0f8; box-shadow: 0 0 0 8px #c9d8fb; }
.invalid-icon { position: absolute; right: 23px; top: 23px; width: 30px; height: 30px; }
.err { margin: 0; height: 122px; padding-top: 48px; font: 700 28px/1.5 "Liberation Serif", serif; color: #6c757d; }
.field + .field { margin-top: 32px; }
.err + .field { margin-top: 0; }
.bubble {
  position: absolute; left: 363px; top: -16px; width: 377px; height: 83px; background: #fff; border: 2px solid #8a8a8a; border-radius: 8px;
  box-shadow: 4px 6px 8px rgba(0,0,0,.28); display: flex; align-items: center; padding: 0 0 2px 16px; font: 27.2px/1 Inter, sans-serif; color: #000; white-space: nowrap;
}
.bubble-arrow { position: absolute; left: 19px; top: -17px; }
.bubble-icon { flex: none; margin-right: 17px; }
.actions { display: flex; gap: 8px; margin-top: 32px; position: relative; z-index: 1; }
.btn { height: 76px; font: 32px "Liberation Serif", serif; border-radius: 0; padding: 0; }
.btn-back { width: 235px; background: #fff; border: 3px solid #000; color: #000; }
.btn-go { width: 158px; background: #222; border: 0; color: #fff; }

/* dock */
.dock {
  width: 2719px; height: 119px; flex: none; margin: 2px 0 0 81px; padding: 19px 0 0 18px; display: flex; gap: 25px;
  border-radius: 30px; border: 1px solid rgba(255,255,255,.25); border-bottom: 3px solid rgba(255,200,160,.6);
  background: linear-gradient(90deg, #6f9bd0 0, #7199cf 380px, #e29a62 480px, #eb9858 800px, #f2825a 1000px, #ea9c58 1300px, #f17f58 1800px, #ef8d5c 2100px, #ee9a58 2300px, #f08b5c 100%);
}
.di { width: 72px; flex: none; position: relative; }
.di svg { display: block; width: 72px; height: 72px; }
.di-wide svg { width: 84px; height: 80px; margin: -2px 0 0 -6px; }
.di-file svg { height: 84px; margin-top: -7px; }
.dot { width: 8px; height: 8px; border-radius: 50%; background: #7a1a04; margin: 17px auto 0; }
.dot-blue { background: #05265c; }
.dot-none { background: none; }
.badge {
  position: absolute; right: -12px; top: -9px; width: 36px; height: 36px; border-radius: 50%; background: #e9523f;
  color: #fff; font: 400 20px/36px Inter, sans-serif; text-align: center;
}
.dock-sep { width: 2px; height: 88px; background: #c8622c; flex: none; align-self: flex-start; margin-top: -4px; }
.dock-sep-a { margin-left: 10px; margin-right: 8px; }
.dock-sep-b { margin-left: 11px; margin-right: 8px; }
.cal-mon { font: 700 15px Inter, sans-serif; fill: #fff; }
.cal-day { font: 300 42px Inter, sans-serif; fill: #333; }
.tv { font: 500 32px Inter, sans-serif; fill: #fff; }
```
